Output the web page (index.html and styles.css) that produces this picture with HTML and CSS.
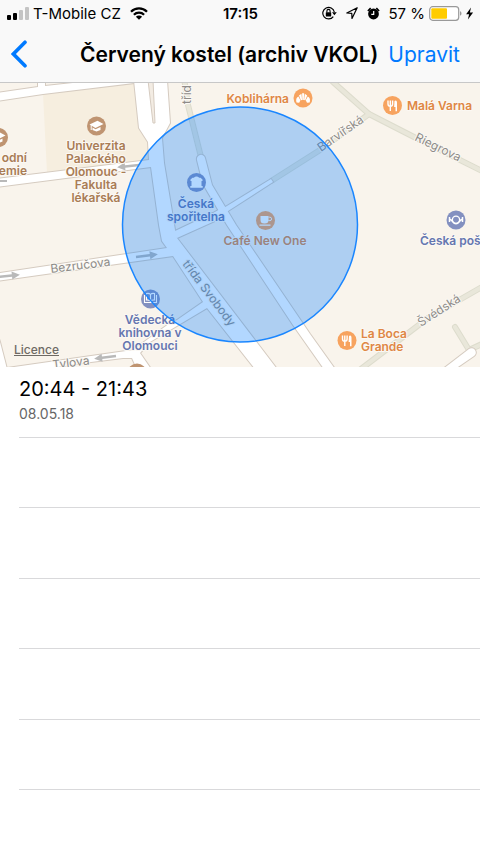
FILE: index.html
```html
<!DOCTYPE html>
<html lang="cs">
<head>
  <meta charset="UTF-8" />
  <meta name="viewport" content="width=device-width, initial-scale=1" />
  <title>Červený kostel (archiv VKOL)</title>
  <link rel="stylesheet" href="styles.css">
</head>
<body>
  <header class="top">
    <div class="status">
      <div class="status-left">
        <svg width="22" height="14" viewBox="0 0 22 14">
          <rect x="0" y="9" width="4" height="5" rx="1"/>
          <rect x="6" y="7" width="4" height="7" rx="1"/>
          <rect x="12" y="4" width="4" height="10" rx="1" fill="#c4c4c4"/>
          <rect x="18" y="1" width="4" height="13" rx="1" fill="#c4c4c4"/>
        </svg>
        <span>T-Mobile CZ</span>
        <svg class="wifi" width="18" height="13" viewBox="0 0 18 13">
          <g fill="none" stroke="#000" stroke-width="2.3">
            <path d="M1 4.7A11.4 11.4 0 0 1 17 4.7"/>
            <path d="M3.9 7.8A7.3 7.3 0 0 1 14.1 7.8"/>
          </g>
          <path d="M9 12.8L5.9 9.7A4.4 4.4 0 0 1 12.1 9.7Z"/>
        </svg>
      </div>
      <time class="clock">17:15</time>
      <div class="status-right">
        <svg width="15" height="14" viewBox="0 0 15 14">
          <path d="M11.3 10.6A5.8 5.8 0 1 1 12.300 6" fill="none" stroke="#000" stroke-width="1.2"/>
          <path d="M10 6.200h4.800l-2.400 3z"/>
          <rect x="3.800" y="6.200" width="5.400" height="4.200" rx=".5"/>
          <path d="M4.900 6.400V5a1.600 1.600 0 0 1 3.200 0v1.400" fill="none" stroke="#000" stroke-width="1.1"/>
        </svg>
        <svg class="location" width="12" height="12" viewBox="0 0 12 12">
          <path d="M11.200 .8L.8 6l5 .4.2 5z" fill="none" stroke="#000" stroke-width="1.2" stroke-linejoin="round"/>
        </svg>
        <svg width="13" height="13" viewBox="0 0 13 13">
          <circle cx="6.500" cy="7" r="5.400"/>
          <path d="M.9 4L3.700 1.100M12.100 4L9.300 1.100" stroke="#000" stroke-width="1.700"/>
          <path d="M6.700 4v3.300H4.300" fill="none" stroke="#fff" stroke-width="1.2"/>
        </svg>
        <span class="percent">57 %</span>
        <svg width="45" height="15" viewBox="0 0 45 15">
          <rect x=".7" y=".7" width="29" height="13.600" rx="3" fill="#fff" stroke="#999" stroke-width="1.200"/>
          <rect x="2.300" y="2.300" width="15.700" height="10.400" rx="1" fill="#ffcc00"/>
          <path d="M31 5.300c2 .7 2 3.700 0 4.400z" fill="#999"/>
          <path d="M42 1.500L37.100 8.200h3L38.900 13.500 44.100 6.500h-3.200z"/>
        </svg>
      </div>
    </div>
    <nav class="navbar">
      <button class="back" aria-label="Zpět">
        <svg width="17" height="28" viewBox="0 0 17 28">
          <path d="M14 2.200L2.400 14 14 25.800" fill="none" stroke="#007aff" stroke-width="3.600" stroke-linecap="round"/>
        </svg>
      </button>
      <h1>Červený kostel (archiv VKOL)</h1>
      <button class="edit">Upravit</button>
    </nav>
  </header>

  <main>
    <section class="map">
      <svg class="map-canvas" viewBox="0 83 480 284">
        <defs>
          <g id="roads">
            <path d="M134 80L139 128L148 142L149 160L151 167L159 225L162 241L167 248L173 256L207 308L255 369L277 369L177 238L175 230L164 163L162 138L170 123L167 80Z"/>
            <path d="M-4 179L149 160L158 160L158 168L151 167L-4 187Z"/>
            <path d="M-4 93L38 87L38 78L45 78L45 86L82 82L134 78L134 83L43 94L-4 101Z"/>
            <path d="M-4 273.500L167 248L178 248L173 256L-4 281Z"/>
            <path d="M197 160A4 4 0 0 1 205 158L212 185L236 225L310 334L335 369L324 369L293 325L227 225L203 184Z"/>
            <path d="M170 233L175 231L213 213L222 208L226 216L177 238Z"/>
            <path d="M210 300L203 302L177 320L170 323L133 350L7 368L7 375L83 363L123 358L132 358L137 369L151 369L140 353L150 342L207 308Z"/>
            <path d="M-4 330L0 342L7 369L-4 372Z"/>
            <path d="M443 369L469 349A4 4 0 0 1 474 356L455 369Z"/>
            <path d="M222 209L271 179L273 182L225 213Z"/>
          </g>
          <g id="paths">
            <path d="M272 180.500L320 150L369 114L333 82"/>
            <path d="M369 114L412 136L482 171"/>
            <path d="M184 78L188 105L201 157"/>
            <path d="M482 287L428 318L361 369"/>
            <path d="M455 327L469 350L482 344"/>
          </g>
          <g id="cap">
            <path d="M-7-1.500L1-5.200 7-2 -1 2Z"/>
            <path d="M-4 1.500L-1 3.300 4 1v3L0 5.500-4 4z"/>
            <path d="M-5.300-1v5" fill="none" stroke="#fff"/>
          </g>
          <g id="cutlery">
            <path d="M-4.500-5v3.500c0 3 4.600 3 4.600 0V-5M-2.200-5V5.500" fill="none" stroke="#fff" stroke-width="1.400"/>
            <path d="M2-4.500C3.500-6 4.700-4.500 4.500-2V5.700H3V1.500H1.600Z"/>
          </g>
          <path id="arrow" d="M0 -1.300H14V-4L22 0L14 4V1.300H0Z"/>
        </defs>

        <rect class="land" y="80" width="480" height="290"/>
        <path class="campus" d="M43 94L134 83L139 128L148 141L149 160L47 173Z"/>
        <use href="#paths" class="path-edge"/>
        <use href="#paths" class="path-fill"/>
        <use href="#roads" class="road-edge"/>
        <use href="#roads" class="road-fill"/>
        <path class="island" d="M148 80L153 123L155 123L153 80Z"/>

        <g class="arrows">
          <use href="#arrow" transform="translate(139 165) rotate(174)"/>
          <use href="#arrow" transform="translate(-2 277) rotate(-6)"/>
          <use href="#arrow" transform="translate(136 257) rotate(-7)"/>
          <use href="#arrow" transform="translate(116 356) rotate(173)"/>
          <path d="M0 180h7v2H0z"/>
        </g>

        <g class="street">
          <text transform="translate(191 104) rotate(-90)">tříd</text>
          <text transform="translate(51 273) rotate(-7)">Bezručova</text>
          <text transform="translate(53 369) rotate(-7)">Tylova</text>
          <text transform="translate(182 264) rotate(53)">třída Svobody</text>
          <text transform="translate(321 152) rotate(-35)">Barvířská</text>
          <text transform="translate(414 140) rotate(26)">Riegrova</text>
          <text transform="translate(421 327) rotate(-33)">Švédská</text>
        </g>

        <g class="school">
          <circle cx="96.500" cy="126" r="9.500"/>
          <circle cx="-1.500" cy="137.500" r="9.500"/>
          <circle cx="137" cy="373" r="9.500"/>
          <text x="96" y="150">Univerzita</text>
          <text x="96" y="163">Palackého</text>
          <text x="96" y="176">Olomouc -</text>
          <text x="96" y="189">Fakulta</text>
          <text x="96" y="202">lékařská</text>
          <text class="end" x="27" y="162">odní</text>
          <text class="end" x="27" y="175">emie</text>
        </g>
        <g class="food">
          <circle cx="303" cy="98" r="9.500"/>
          <circle cx="392.500" cy="105.500" r="9.500"/>
          <circle cx="347" cy="340.500" r="9.500"/>
          <circle cx="265.500" cy="220.500" r="9.500"/>
          <text class="end" x="289" y="103">Koblihárna</text>
          <text class="start" x="407" y="110">Malá Varna</text>
          <text class="start" x="361" y="338">La Boca</text>
          <text class="start" x="361" y="351">Grande</text>
          <text x="265" y="245">Café New One</text>
        </g>
        <g class="civic">
          <circle cx="196.500" cy="182.500" r="9.500"/>
          <circle cx="150.500" cy="299" r="9.500"/>
          <circle cx="456" cy="220" r="9.500"/>
          <text x="196" y="208">Česká</text>
          <text x="196" y="221">spořitelna</text>
          <text x="150" y="324">Vědecká</text>
          <text x="150" y="337">knihovna v</text>
          <text x="150" y="350">Olomouci</text>
          <text class="start" x="420" y="245">Česká poš</text>
        </g>

        <g class="glyphs">
          <use href="#cap" x="96.500" y="126"/>
          <use href="#cap" x="-1.500" y="137.500"/>
          <use href="#cutlery" x="392.500" y="105.500"/>
          <use href="#cutlery" x="347" y="340.500"/>
          <!-- croissant -->
          <path d="M296.500 102.500c-.8-3-.2-5 1.900-6.100l2 3.900-1.200 2.400zM299 95.600l2.400-1.900.7 6.300-1.200.2zM302.100 93.200h2l-.3 6.800h-1.400zM304.800 93.700l2.400 1.900-1.900 4.600-1.200-.2zM307.800 96.400c2.100 1.100 2.700 3.100 1.900 6.100l-2.700.2-1.200-2.400z"/>
          <!-- cup -->
          <path d="M260.500 216h8v4a3.600 3.600 0 0 1-3.600 3.600h-.8a3.600 3.600 0 0 1-3.600-3.600zM259.500 224.500h11v1.200h-11z"/>
          <path d="M268.500 217.200h1.400a1.500 1.500 0 0 1 0 3.400h-1.600" fill="none" stroke="#fff"/>
          <!-- bank -->
          <path d="M190.500 179.500l2-1.800h1.300c1.600-1.600 3.800-1.600 5.400 0h1.300l2 1.800v1.500h-1v5h1.200v1.700h-12.400V186h1.200v-5h-1z"/>
          <!-- book -->
          <path d="M144.500 295v7.500h12V295M146.500 293.500c2-.4 3.200 0 4 1v6.500c-.8-.9-2-1.200-4-1zM154.500 293.500c-2-.4-3.200 0-4 1v6.500c.8-.9 2-1.200 4-1z" fill="none" stroke="#fff" stroke-width="1.100"/>
          <!-- post horn -->
          <path d="M449.500 217v5M449.500 219.300c3 0 2.800 4.400 6.500 4.400s3.500-4.400 6.500-4.400M462.500 217v5" fill="none" stroke="#fff" stroke-width="1.500"/>
          <circle cx="456" cy="219.800" r="3.600" fill="none" stroke="#fff" stroke-width="1.300"/>
        </g>

        <circle class="region" cx="240" cy="224.500" r="117.500"/>
      </svg>
      <a class="legal" href="#">Licence</a>
    </section>

    <ul class="visits">
      <li>
        <span class="visit-time">20:44 - 21:43</span>
        <span class="visit-date">08.05.18</span>
      </li>
      <li></li>
      <li></li>
      <li></li>
      <li></li>
      <li></li>
    </ul>
  </main>
</body>
</html>
```

FILE: styles.css
```css
* {
  box-sizing: border-box;
}

body {
  margin: 0;
  background-color: #fff;
  color: #000;
  font-family: Inter, 'Liberation Sans', sans-serif;
}

svg {
  display: block;
  flex: none;
}

button {
  padding: 0;
  border: none;
  background: none;
  color: #007aff;
  font: inherit;
  cursor: pointer;
}

.top {
  background-color: #f9f9f9;
  border-bottom: 1px solid #c8c8c8;
}

.status {
  display: grid;
  grid-template-columns: 1fr auto 1fr;
  align-items: center;
  height: 26px;
  padding: 0 6px 0 7px;
  font-size: 15px;
}

.status-left, .status-right {
  display: flex;
  align-items: center;
  gap: 4px;
  white-space: nowrap;
}

.status-right {
  justify-content: flex-end;
}

.wifi, .location {
  margin: 0 5px;
}

.clock {
  font-weight: 600;
}

.percent {
  margin-left: 4px;
}

.navbar {
  display: flex;
  align-items: center;
  height: 56px;
  padding: 0 20px 0 11px;
  font-size: 21px;
}

.navbar h1 {
  flex: 1;
  margin: 0 10px 0 0;
  font-size: 21px;
  font-weight: 600;
  text-align: right;
  white-space: nowrap;
}

/* map */
.map {
  position: relative;
}

.map-canvas {
  width: 100%;
  font-size: 12px;
}

.land {
  fill: #f9f4ec;
}

.campus {
  fill: #f6eedf;
}

.road-edge {
  fill: #d5cbc0;
  stroke: #d5cbc0;
  stroke-width: 2px;
}

.road-fill {
  fill: #fff;
}

.island {
  fill: #f3ece3;
  stroke: #d5cbc0;
}

.path-edge, .path-fill {
  fill: none;
  stroke: #dddccd;
  stroke-width: 6px;
  stroke-linecap: round;
}

.path-fill {
  stroke: #e9e7da;
  stroke-width: 4px;
}

.arrows {
  fill: #b9b9b9;
}

.map-canvas text {
  paint-order: stroke;
  stroke: #fbf8f3;
  stroke-width: 2px;
  stroke-linejoin: round;
}

.street {
  fill: #8e8c89;
}

.school, .food, .civic {
  font-weight: 600;
  text-anchor: middle;
}

.school text {
  fill: #a97c55;
}

.school circle {
  fill: #bf9471;
}

.food text {
  fill: #df8745;
}

.food circle {
  fill: #f7a35f;
}

.civic text {
  fill: #6576b0;
}

.civic circle {
  fill: #8390c0;
}

.map-canvas .end {
  text-anchor: end;
}

.map-canvas .start {
  text-anchor: start;
}

.glyphs {
  fill: #fff;
}

.region {
  fill: #007aff;
  fill-opacity: 0.3;
  stroke: #1a86ff;
  stroke-width: 1.5px;
}

.legal {
  position: absolute;
  left: 14px;
  bottom: 10px;
  color: #6e6a64;
  font-size: 12px;
  font-weight: 500;
}

/* visits */
.visits {
  display: grid;
  grid-auto-rows: 1fr;
  height: 423px;
  margin: 0;
  padding: 0 0 0 19px;
  list-style: none;
}

.visits li {
  display: flex;
  flex-direction: column;
  gap: 3px;
  padding-top: 9px;
  border-bottom: 1px solid #d9d9db;
}

.visit-time {
  font-size: 20px;
  line-height: 26px;
}

.visit-date {
  color: #666;
  font-size: 14px;
  line-height: 18px;
}
```
